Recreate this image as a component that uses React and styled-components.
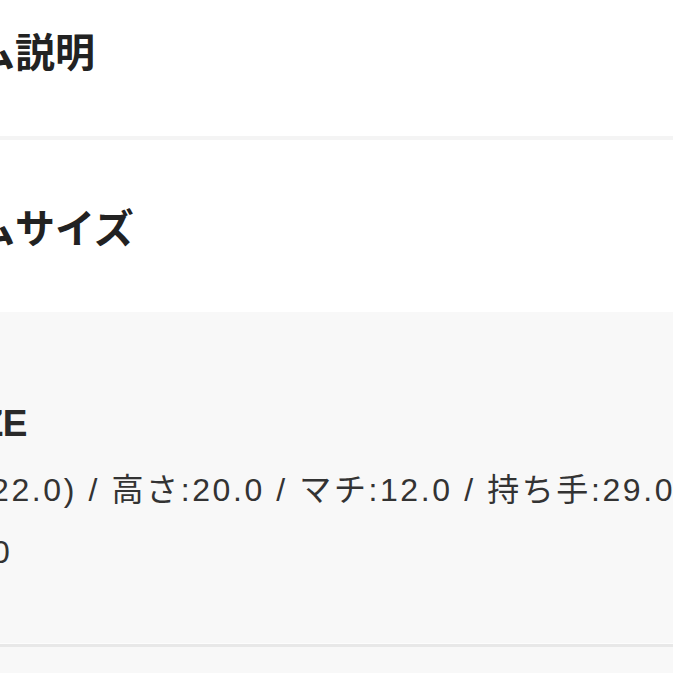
import React from 'react';
import styled, { createGlobalStyle } from 'styled-components';

const GlobalStyle = createGlobalStyle`
  html, body {
    margin: 0;
    padding: 0;
    background: #ffffff;
    overflow: hidden;
  }
  body {
    font-family: 'Liberation Sans', 'Noto Sans CJK JP', sans-serif;
    color: #333333;
  }
`;

const Page = styled('div')`
  width: 1000px;
  margin-top: -36px;
  margin-left: -141px;
`;

const HeadingSection = styled('section')`
  height: 172px;
  display: flex;
  align-items: center;
  background: #ffffff;
  border-bottom: ${({ divider }) => (divider ? '4px solid #f4f4f4' : 'none')};
`;

const Heading = styled('h2')`
  margin: 0;
  font-family: 'Noto Sans CJK JP', sans-serif;
  font-size: 40px;
  font-weight: 700;
  line-height: 1;
  color: #222222;
`;

const Panel = styled('div')`
  background: #f8f8f8;
  padding: ${({ first }) => (first ? '90px 0 60px' : '24px 0')};
`;

const Label = styled('div')`
  font-size: 37px;
  font-weight: 700;
  letter-spacing: -0.6px;
  line-height: 44px;
  color: #2a2a2a;
  margin-bottom: 13px;
`;

const Line = styled('div')`
  font-size: 32px;
  letter-spacing: 2.6px;
  line-height: 62px;
  white-space: nowrap;
  color: #333333;
`;

const Divider = styled('div')`
  height: 3px;
  background: #e8e8e8;
  border-top: 1px solid #fdfdfd;
`;

const App = () => {
  return (
    <>
      <GlobalStyle />
      <Page>
        <HeadingSection divider>
          <Heading>アイテム説明</Heading>
        </HeadingSection>
        <HeadingSection>
          <Heading>アイテムサイズ</Heading>
        </HeadingSection>
        <Panel first>
          <Label>ONE SIZE</Label>
          <Line>幅:30.0(22.0) / 高さ:20.0 / マチ:12.0 / 持ち手:29.0 / ショルダー:120.0</Line>
          <Line>容量:10.0</Line>
        </Panel>
        <Divider />
        <Panel>
          <Line>&nbsp;</Line>
        </Panel>
      </Page>
    </>
  );
};

export default App;
